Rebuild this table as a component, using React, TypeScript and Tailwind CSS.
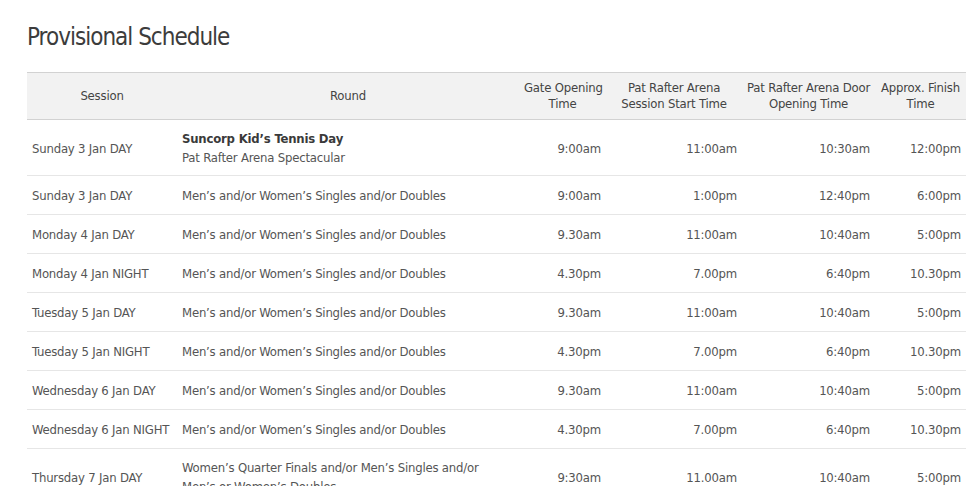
const rows: { session: string; round: React.ReactNode; gate: string; start: string; door: string; finish: string; tall?: boolean }[] = [
  {
    session: "Sunday 3 Jan DAY",
    round: (
      <>
        <span className="font-bold text-[#3a3a3a]">Suncorp Kid’s Tennis Day</span>
        <br />
        Pat Rafter Arena Spectacular
      </>
    ),
    gate: "9:00am",
    start: "11:00am",
    door: "10:30am",
    finish: "12:00pm",
    tall: true,
  },
  { session: "Sunday 3 Jan DAY", round: "Men’s and/or Women’s Singles and/or Doubles", gate: "9:00am", start: "1:00pm", door: "12:40pm", finish: "6:00pm" },
  { session: "Monday 4 Jan DAY", round: "Men’s and/or Women’s Singles and/or Doubles", gate: "9.30am", start: "11:00am", door: "10:40am", finish: "5:00pm" },
  { session: "Monday 4 Jan NIGHT", round: "Men’s and/or Women’s Singles and/or Doubles", gate: "4.30pm", start: "7.00pm", door: "6:40pm", finish: "10.30pm" },
  { session: "Tuesday 5 Jan DAY", round: "Men’s and/or Women’s Singles and/or Doubles", gate: "9.30am", start: "11:00am", door: "10:40am", finish: "5:00pm" },
  { session: "Tuesday 5 Jan NIGHT", round: "Men’s and/or Women’s Singles and/or Doubles", gate: "4.30pm", start: "7.00pm", door: "6:40pm", finish: "10.30pm" },
  { session: "Wednesday 6 Jan DAY", round: "Men’s and/or Women’s Singles and/or Doubles", gate: "9.30am", start: "11:00am", door: "10:40am", finish: "5:00pm" },
  { session: "Wednesday 6 Jan NIGHT", round: "Men’s and/or Women’s Singles and/or Doubles", gate: "4.30pm", start: "7.00pm", door: "6:40pm", finish: "10.30pm" },
  {
    session: "Thursday 7 Jan DAY",
    round: (
      <>
        Women’s Quarter Finals and/or Men’s Singles and/or
        <br />
        Men’s or Women’s Doubles
      </>
    ),
    gate: "9:30am",
    start: "11.00am",
    door: "10:40am",
    finish: "5:00pm",
    tall: true,
  },
];

const th = "px-[5px] py-[7px] text-center font-normal whitespace-nowrap";

export default function App() {
  return (
    <div
      className="h-[486px] overflow-hidden bg-white pl-[27px] pt-[20px] text-[#555]"
      style={{ fontFamily: '"DejaVu Sans Condensed", "Liberation Sans Narrow", "Liberation Sans", sans-serif' }}
    >
      <h1 className="text-[24px] font-normal leading-[34px] tracking-[-1px] text-[#3c3c3c]">Provisional Schedule</h1>
      <table className="mt-[18px] w-[939px] table-fixed border-collapse text-[13px] leading-[19px] tracking-[-0.2px]">
        <colgroup>
          <col className="w-[150px]" />
          <col className="w-[342px]" />
          <col className="w-[87px]" />
          <col className="w-[136px]" />
          <col className="w-[133px]" />
          <col className="w-[91px]" />
        </colgroup>
        <thead>
          <tr className="border-y border-[#d2d2d2] bg-[#f2f2f2] text-[#444] leading-[16px]">
            <th className={th}>Session</th>
            <th className={th}>Round</th>
            <th className={th}>
              Gate Opening
              <br />
              Time
            </th>
            <th className={th}>
              Pat Rafter Arena
              <br />
              Session Start Time
            </th>
            <th className={th}>
              Pat Rafter Arena Door
              <br />
              Opening Time
            </th>
            <th className={th}>
              Approx. Finish
              <br />
              Time
            </th>
          </tr>
        </thead>
        <tbody>
          {rows.map((r, i) => {
            const td = r.tall ? "px-[5px] pt-[9px] pb-[8px] align-middle" : "px-[5px] pt-[10px] pb-[9px] align-middle";
            return (
              <tr key={i} className="border-b border-[#e6e6e6]">
                <td className={`${td} whitespace-nowrap`}>{r.session}</td>
                <td className={td}>{r.round}</td>
                <td className={`${td} text-right`}>{r.gate}</td>
                <td className={`${td} text-right`}>{r.start}</td>
                <td className={`${td} text-right`}>{r.door}</td>
                <td className={`${td} text-right`}>{r.finish}</td>
              </tr>
            );
          })}
        </tbody>
      </table>
    </div>
  );
}
